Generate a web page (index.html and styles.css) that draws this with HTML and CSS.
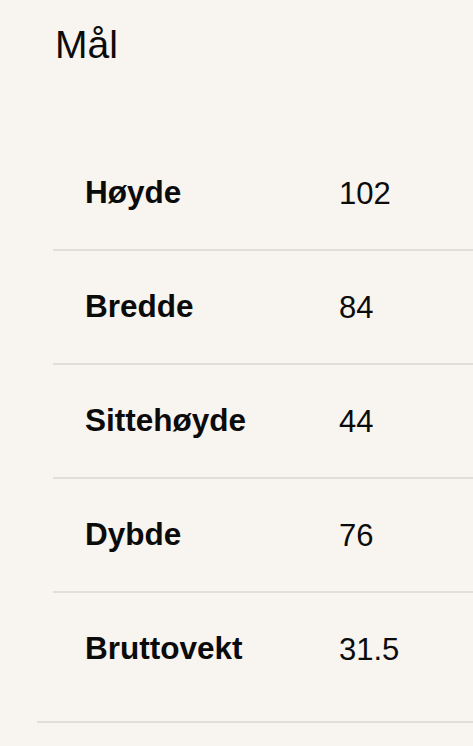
FILE: index.html
```html
<!DOCTYPE html>
<html lang="no">
<head>
  <meta charset="UTF-8">
  <meta name="viewport" content="width=device-width, initial-scale=1.0">
  <title>Mål</title>
  <link rel="stylesheet" href="styles.css">
</head>
<body>
  <section class="specs">
    <div class="specs-inner">
      <h2 class="specs-title">Mål</h2>
      <dl class="spec-list">
        <div class="spec-row">
          <dt>Høyde</dt>
          <dd>102</dd>
        </div>
        <div class="spec-row">
          <dt>Bredde</dt>
          <dd>84</dd>
        </div>
        <div class="spec-row">
          <dt>Sittehøyde</dt>
          <dd>44</dd>
        </div>
        <div class="spec-row">
          <dt>Dybde</dt>
          <dd>76</dd>
        </div>
        <div class="spec-row">
          <dt>Bruttovekt</dt>
          <dd>31.5</dd>
        </div>
      </dl>
    </div>
  </section>
</body>
</html>
```

FILE: styles.css
```css
body {
  font-family: 'Liberation Sans', Arial, sans-serif;
  margin: 0;
  padding: 0;
  background-color: #f8f4f0;
  color: #0b0b0b;
  min-height: 100vh;
  overflow: hidden;
}
.specs {
  margin-left: 37px;
  padding-bottom: 16px;
  border-bottom: 2px solid #e2dedb;
}
.specs-inner {
  padding-left: 16px;
}
.specs-title {
  margin: 0;
  padding: 25px 0 0 2px;
  font-size: 39px;
  font-weight: 400;
  line-height: 1;
}
.spec-list {
  margin: 73px 0 0;
  padding: 0;
}
.spec-row {
  display: flex;
  align-items: center;
  height: 112px;
  padding-left: 32px;
  border-bottom: 2px solid #e2dedb;
}
.spec-row:last-child {
  border-bottom: none;
}
.spec-row dt {
  width: 254px;
  font-size: 31.5px;
  font-weight: 700;
  line-height: 1;
}
.spec-row dd {
  margin: 0;
  font-size: 31px;
  line-height: 1;
}
```
